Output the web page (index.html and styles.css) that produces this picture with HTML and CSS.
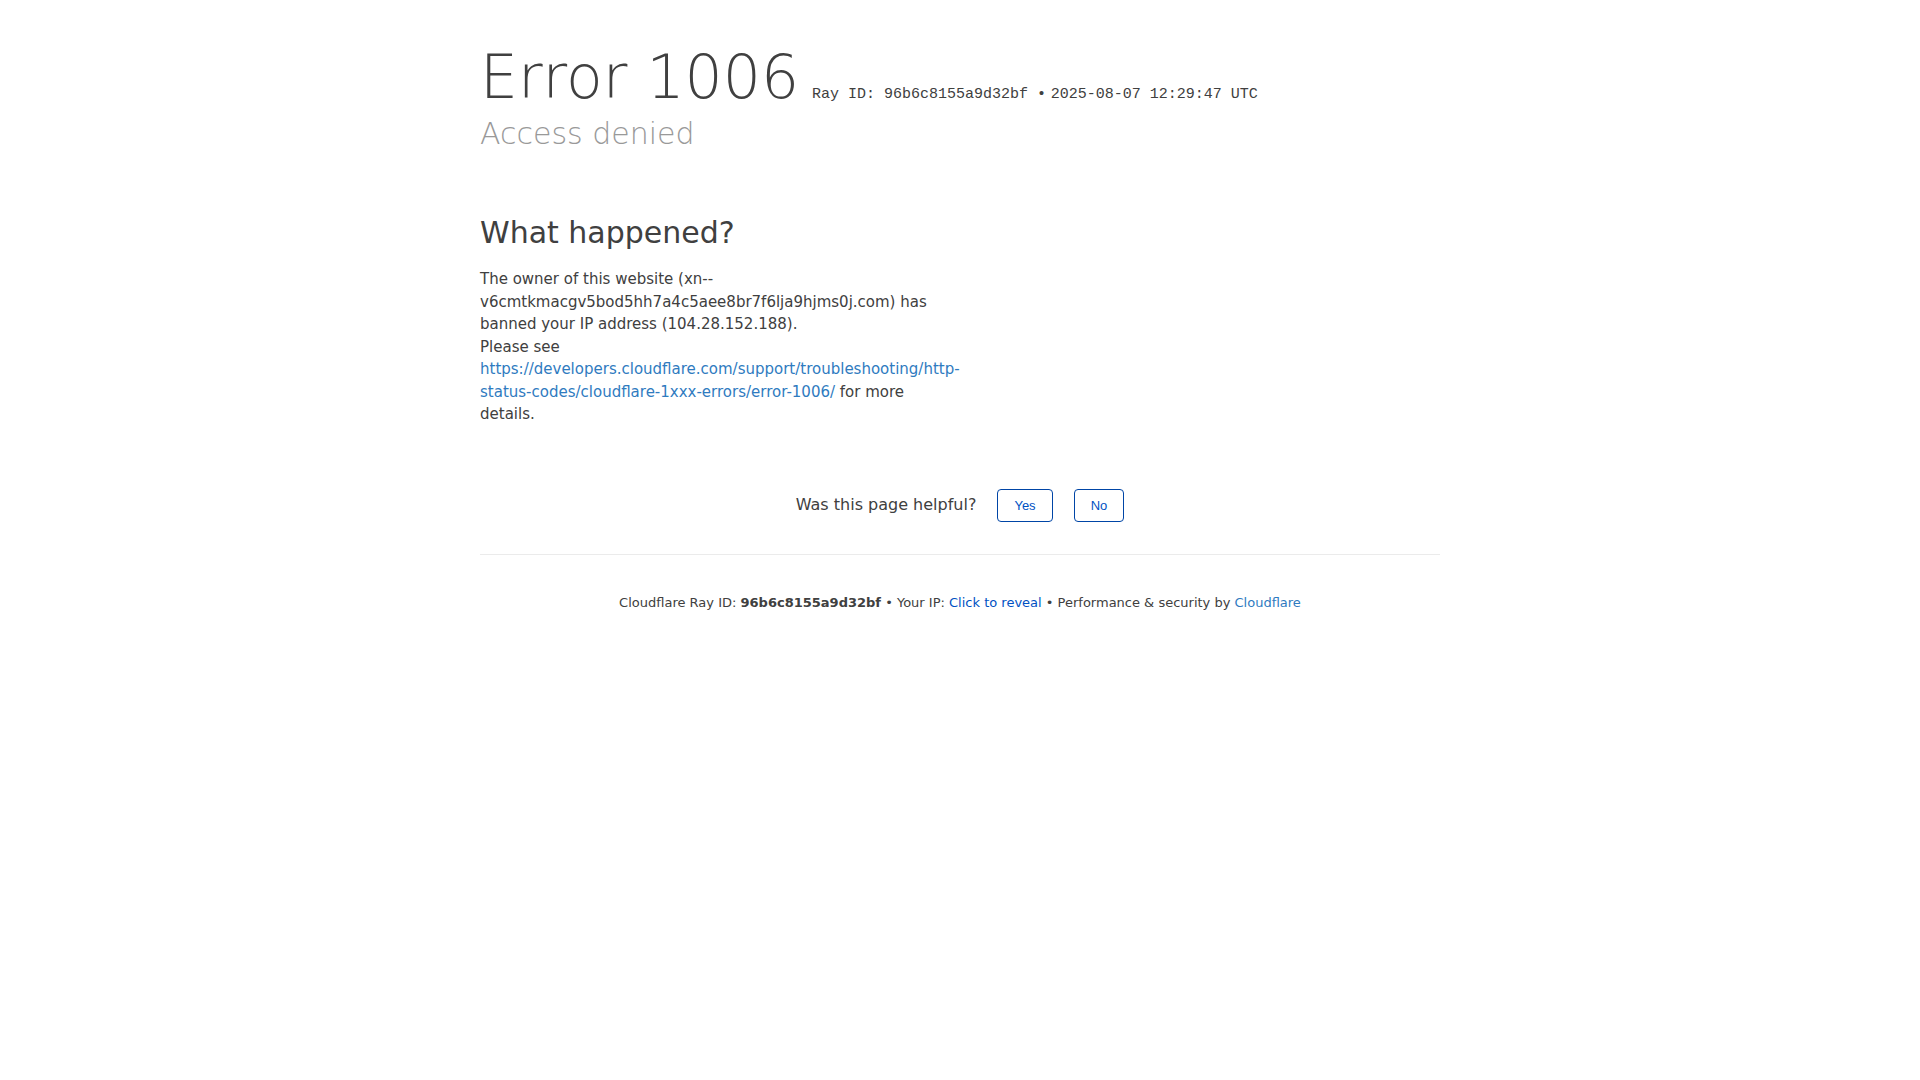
FILE: index.html
```
<!DOCTYPE html>
<html lang="en-US">
<head>
    <meta charset="UTF-8">
    <meta name="viewport" content="width=device-width, initial-scale=1">
    <title>Access denied</title>
    <link rel="stylesheet" href="styles.css">
</head>
<body>
    <div class="wrapper">
        <header class="header">
            <h1>
                <span class="error-title">Error</span>
                <span class="error-code">1006</span>
            </h1>
            <span class="ray">Ray ID: 96b6c8155a9d32bf &bull;</span>
            <span class="ray">2025-08-07 12:29:47 UTC</span>
            <h2 class="subtitle">Access denied</h2>
        </header>

        <section class="content">
            <h2>What happened?</h2>
            <p>The owner of this website (xn--v6cmtkmacgv5bod5hh7a4c5aee8br7f6lja9hjms0j.com) has banned your IP address (104.28.152.188).</p>
            <p>Please see <a href="https://developers.cloudflare.com/support/troubleshooting/http-status-codes/cloudflare-1xxx-errors/error-1006/">https://developers.cloudflare.com/support/troubleshooting/http-status-codes/cloudflare-1xxx-errors/error-1006/</a> for more details.</p>
        </section>

        <div class="feedback">
            <span>Was this page helpful?</span>
            <button class="btn" type="button">Yes</button>
            <button class="btn" type="button">No</button>
        </div>

        <footer class="footer">
            <span>Cloudflare Ray ID: <strong>96b6c8155a9d32bf</strong></span>
            <span>&bull;</span>
            <span>Your IP: <button class="reveal" type="button">Click to reveal</button></span>
            <span>&bull;</span>
            <span>Performance &amp; security by <a href="https://www.cloudflare.com/">Cloudflare</a></span>
        </footer>
    </div>
</body>
</html>
```
FILE: styles.css
```
*{
    box-sizing: border-box;
    margin: 0;
    padding: 0;
}
body{
    background: #fff;
    color: #404040;
    font-family: "DejaVu Sans", sans-serif;
    font-size: 15px;
    line-height: 1.5;
}
a{
    color: #2f7bbf;
    text-decoration: none;
}
.wrapper{
    width: 50%;
    min-width: 640px;
    margin: 0 auto;
    padding-top: 40px;
}
.header h1{
    display: inline-block;
    margin-right: 8px;
    font-size: 60px;
    font-weight: 200;
    line-height: 74px;
}
.ray{
    font-family: "Liberation Mono", monospace;
}
.header .subtitle{
    color: #999;
    font-size: 30px;
    font-weight: 200;
    line-height: 39px;
}
.content{
    width: 50%;
    margin-top: 60px;
}
.content h2{
    margin-bottom: 16px;
    font-size: 30px;
    font-weight: 400;
    line-height: 39px;
}
.feedback{
    display: flex;
    justify-content: center;
    align-items: center;
    gap: 21px;
    margin-top: 63px;
    padding-bottom: 32px;
    border-bottom: 1px solid #ebebeb;
    font-size: 16px;
}
.btn{
    padding: 8px 16px;
    border: 1px solid #0045a6;
    border-radius: 4px;
    background: #fff;
    color: #0051c3;
    font-family: "Liberation Sans", sans-serif;
    font-size: 13px;
}
.footer{
    padding: 38px 0;
    font-size: 13px;
    text-align: center;
}
.reveal{
    border: 0;
    background: none;
    color: #0051c3;
    font: inherit;
}
```
